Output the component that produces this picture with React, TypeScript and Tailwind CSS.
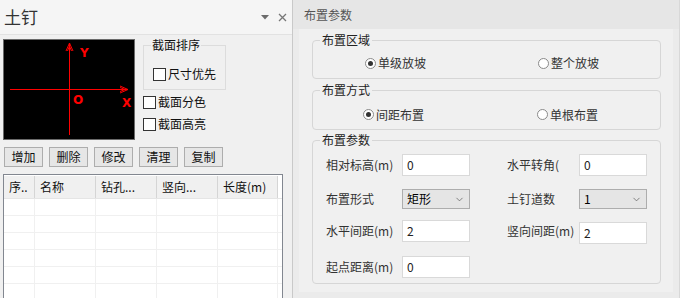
import { ChevronDown } from 'lucide-react';

const font = { fontFamily: '"Noto Sans CJK SC", "Noto Sans", sans-serif' };

function CheckBox({ label }: { label: string }) {
  return (
    <div className="flex items-center gap-[2px] text-[12px] leading-4 text-[#111]">
      <span className="w-[13px] h-[13px] border border-[#333] bg-white" />
      <span>{label}</span>
    </div>
  );
}

function Radio({ label, checked }: { label: string; checked?: boolean }) {
  return (
    <div className="flex items-center gap-[2px] text-[12px] leading-4 text-[#333]">
      <span className="w-[11px] h-[11px] rounded-full border border-[#8a8a8a] bg-white flex items-center justify-center">
        {checked && <span className="w-[5px] h-[5px] rounded-full bg-[#333]" />}
      </span>
      <span>{label}</span>
    </div>
  );
}

function TextBox({ value, className = '' }: { value: string; className?: string }) {
  return (
    <div className={`w-[68px] h-[22px] border border-[#d9d9d9] bg-white pl-[4px] flex items-center text-[12px] text-[#222] ${className}`}>
      {value}
    </div>
  );
}

function Select({ value }: { value: string }) {
  return (
    <div className="w-[68px] h-[20px] border border-[#adadad] bg-[#e5e5e5] pl-[4px] pr-[4px] flex items-center justify-between text-[12px] text-black">
      <span>{value}</span>
      <ChevronDown className="w-[11px] h-[11px] text-[#555]" strokeWidth={1.5} />
    </div>
  );
}

function Group({ title, className = '', children }: { title: string; className?: string; children: React.ReactNode }) {
  return (
    <fieldset className={`border border-[#d6d6d6] rounded-[4px] ${className}`}>
      <legend className="ml-[7px] px-[2px] text-[12px] leading-4 text-[#222]">{title}</legend>
      {children}
    </fieldset>
  );
}

const buttons = ['增加', '删除', '修改', '清理', '复制'];
const columns = [
  { name: '序..', w: 'w-[31px]' },
  { name: '名称', w: 'w-[61px]' },
  { name: '钻孔...', w: 'w-[61px]' },
  { name: '竖向...', w: 'w-[61px]' },
  { name: '长度(m)', w: 'w-[60px]' },
];

export default function App() {
  return (
    <div className="w-[680px] h-[298px] overflow-hidden flex bg-[#f0f0f0]" style={font}>
      {/* left panel */}
      <div className="w-[293px] shrink-0 flex flex-col border-r border-[#c9c9c9]">
        <div className="h-[35px] shrink-0 bg-[#f5f5f5] border-b border-[#e2e2e2] flex items-center justify-between pl-[4px] pr-[5px]">
          <span className="text-[17px] text-[#333]">土钉</span>
          <div className="flex items-center gap-[9px] text-[#777]">
            <svg width="8" height="5" viewBox="0 0 8 5">
              <path d="M0 0 H8 L4 4.5 Z" fill="#6b6b6b" />
            </svg>
            <svg width="9" height="9" viewBox="0 0 9 9">
              <path d="M1 1 L8 8 M8 1 L1 8" stroke="#777" strokeWidth="1.3" />
            </svg>
          </div>
        </div>

        <div className="flex-1 overflow-hidden pl-[3px] pt-[2px]">
          <div className="flex items-start">
            <div className="mt-[2px] w-[132px] h-[101px] border border-[#6a6a6a] bg-black">
              <svg width="130" height="99" viewBox="0 0 130 99">
                <g stroke="#ff0000" strokeWidth="1" fill="none">
                  <path d="M65.5 3 V95" />
                  <path d="M6 49.5 H124" />
                  <path d="M65.5 3 L62 11 M65.5 3 L69 11 M65.5 6 L63.5 11 M65.5 6 L67.5 11" />
                  <path d="M124 49.5 L116 46 M124 49.5 L116 53 M121 49.5 L116 47.5 M121 49.5 L116 51.5" />
                </g>
                <g fill="#ff0000" fontFamily="'DejaVu Sans', sans-serif" fontWeight="bold" fontSize="12">
                  <text x="76" y="17">Y</text>
                  <text x="69" y="64">O</text>
                  <text x="118" y="67">X</text>
                </g>
              </svg>
            </div>

            <div className="ml-[8px] flex flex-col">
              <fieldset className="w-[83px] h-[53px] border border-[#dcdcdc]">
                <legend className="ml-[7px] px-[1px] text-[12px] leading-4 text-[#111]">截面排序</legend>
                <div className="pl-[9px] pt-[13px]">
                  <CheckBox label="尺寸优先" />
                </div>
              </fieldset>
              <div className="h-[22px] flex items-center mt-[1px]">
                <CheckBox label="截面分色" />
              </div>
              <div className="h-[22px] flex items-center">
                <CheckBox label="截面高亮" />
              </div>
            </div>
          </div>

          <div className="flex gap-[6px] ml-[1px] mt-[7px]">
            {buttons.map((b) => (
              <div
                key={b}
                className="w-[39px] h-[20px] border border-[#adadad] bg-[#e6e6e6] flex items-center justify-center text-[12px] text-[#111]"
              >
                {b}
              </div>
            ))}
          </div>

          <div className="mt-[7px] w-[280px] h-[140px] border border-[#828790] bg-white pt-[1px]">
            <div className="flex h-[23px] border-b border-[#e5e5e5]">
              {columns.map((c) => (
                <div
                  key={c.name}
                  className={`${c.w} h-full bg-[#f0f0f0] border-r border-[#d5d5d5] pl-[5px] flex items-center text-[12px] text-[#111]`}
                >
                  {c.name}
                </div>
              ))}
            </div>
            {[0, 1, 2, 3, 4, 5].map((r) => (
              <div key={r} className="flex h-[17px] border-b border-[#f0f0f0]">
                {columns.map((c) => (
                  <div key={c.name} className={`${c.w} h-full border-r border-[#f0f0f0]`} />
                ))}
              </div>
            ))}
          </div>
        </div>
      </div>

      {/* right panel */}
      <div className="flex-1 flex flex-col bg-[#ebebeb] border-r border-[#d8d8d8]">
        <div className="h-[29px] shrink-0 bg-[#e6e6e6] flex items-center pl-[11px] text-[12px] text-[#555]">
          布置参数
        </div>
        <div className="ml-[6px] mr-[6px] h-[263px] bg-[#f0f0f0] pl-[13px] pr-[12px] pt-[3px] flex flex-col">
          <Group title="布置区域" className="h-[47px]">
            <div className="h-[30px] flex items-center pl-[52px]">
              <div className="w-[173px]">
                <Radio label="单级放坡" checked />
              </div>
              <Radio label="整个放坡" />
            </div>
          </Group>

          <Group title="布置方式" className="h-[48px] mt-[3px]">
            <div className="h-[31px] flex items-center pl-[50px] pt-[2px]">
              <div className="w-[174px]">
                <Radio label="间距布置" checked />
              </div>
              <Radio label="单根布置" />
            </div>
          </Group>

          <Group title="布置参数" className="h-[152px] mt-[2px]">
            <div className="pl-[13px] pt-[6px] text-[12px] text-[#333]">
              <div className="flex items-center h-[22px]">
                <span className="w-[76px]">相对标高(m)</span>
                <TextBox value="0" />
                <span className="ml-[37px] w-[72px]">水平转角(</span>
                <TextBox value="0" />
              </div>
              <div className="flex items-center h-[20px] mt-[13px]">
                <span className="w-[76px]">布置形式</span>
                <Select value="矩形" />
                <span className="ml-[37px] w-[72px]">土钉道数</span>
                <Select value="1" />
              </div>
              <div className="flex items-center h-[22px] mt-[11px]">
                <span className="w-[76px]">水平间距(m)</span>
                <TextBox value="2" />
                <span className="ml-[37px] w-[72px]">竖向间距(m)</span>
                <TextBox value="2" className="mt-[4px]" />
              </div>
              <div className="flex items-center h-[22px] mt-[14px]">
                <span className="w-[76px]">起点距离(m)</span>
                <TextBox value="0" />
              </div>
            </div>
          </Group>
        </div>
      </div>
    </div>
  );
}
